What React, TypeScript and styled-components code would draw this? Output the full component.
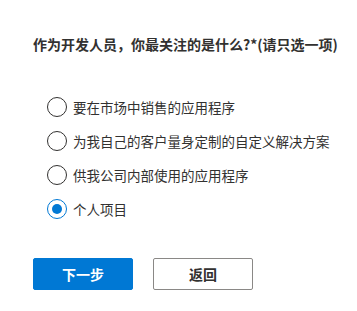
import React, { useState } from 'react';
import styled, { createGlobalStyle } from 'styled-components';

const GlobalStyle = createGlobalStyle`
  html, body {
    margin: 0;
    padding: 0;
    background: #ffffff;
  }
  body {
    font-family: "Noto Sans CJK SC", "Liberation Sans", sans-serif;
    color: #323130;
  }
`;

const options = [
    '要在市场中销售的应用程序',
    '为我自己的客户量身定制的自定义解决方案',
    '供我公司内部使用的应用程序',
    '个人项目',
];

const Page = styled.div`
  width: 357px;
  height: 311px;
  box-sizing: border-box;
  padding: 35px 0 0 33px;
  display: flex;
  flex-direction: column;
`;

const Title = styled.div`
  font-size: 14px;
  font-weight: 700;
  line-height: 18px;
  color: #323130;
  white-space: nowrap;
`;

const OptionList = styled.div`
  display: flex;
  flex-direction: column;
  gap: 14px;
  margin-top: 44px;
  padding-left: 14px;
`;

const OptionRow = styled.label`
  display: flex;
  align-items: center;
  gap: 6px;
  height: 20px;
  cursor: pointer;
`;

const Radio = styled.span<{ $checked: boolean }>`
  width: 20px;
  height: 20px;
  box-sizing: border-box;
  border-radius: 50%;
  border: 1px solid ${p => (p.$checked ? '#0078d4' : '#323130')};
  display: flex;
  align-items: center;
  justify-content: center;
  flex-shrink: 0;

  &::after {
    content: '';
    width: 10px;
    height: 10px;
    border-radius: 50%;
    background: #0078d4;
    display: ${p => (p.$checked ? 'block' : 'none')};
  }
`;

const OptionText = styled.span`
  font-size: 13.5px;
  line-height: 20px;
  color: #323130;
  white-space: nowrap;
`;

const Buttons = styled.div`
  display: flex;
  gap: 20px;
  margin-top: 39px;
`;

const Button = styled.button<{ $primary?: boolean }>`
  width: 100px;
  height: 32px;
  box-sizing: border-box;
  border-radius: 2px;
  border: 1px solid ${p => (p.$primary ? '#0078d4' : '#8a8886')};
  background: ${p => (p.$primary ? '#0078d4' : '#ffffff')};
  color: ${p => (p.$primary ? '#ffffff' : '#323130')};
  font-family: "Noto Sans CJK SC", "Liberation Sans", sans-serif;
  font-size: 14px;
  font-weight: 700;
  padding: 0;
  cursor: pointer;
`;

export default function App() {
    const [selected, setSelected] = useState(3);
    return (
        <>
            <GlobalStyle />
            <Page>
                <Title>作为开发人员，你最关注的是什么?*(请只选一项)</Title>
                <OptionList>
                    {options.map((o, i) => (
                        <OptionRow key={o} onClick={() => setSelected(i)}>
                            <Radio $checked={selected === i} />
                            <OptionText>{o}</OptionText>
                        </OptionRow>
                    ))}
                </OptionList>
                <Buttons>
                    <Button $primary>下一步</Button>
                    <Button>返回</Button>
                </Buttons>
            </Page>
        </>
    );
}
